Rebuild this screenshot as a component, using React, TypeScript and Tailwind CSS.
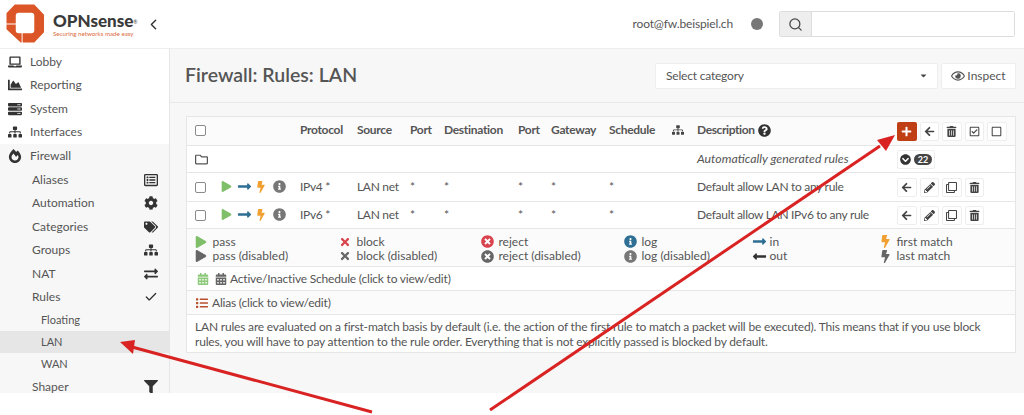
import React from "react";
import {
  FaLaptop, FaChartArea, FaServer, FaSitemap, FaFireAlt, FaRegListAlt, FaCog, FaTags, FaExchangeAlt, FaFilter,
  FaPlay, FaLongArrowAltRight, FaLongArrowAltLeft, FaBolt, FaInfoCircle, FaTimes, FaTimesCircle, FaCalendarAlt, FaList, FaPlus,
  FaArrowLeft, FaTrashAlt, FaRegCheckSquare, FaRegSquare, FaPencilAlt, FaRegClone, FaChevronCircleDown, FaQuestionCircle,
  FaRegFolder, FaRegEye, FaCaretDown,
} from "react-icons/fa";
import { Search, ChevronLeft, Check as CheckMark } from "lucide-react";

const Logo = () => (
  <svg viewBox="0 0 40 40" className="w-[39px] h-[39px] shrink-0 -mt-[2px]">
    <path d="M9 0.5 H29 L39 11 V29 L29 39.5 H17 V30 H26 Q29 30 29 27 V12 Q29 9 26 9 H13 Q10 9 10 12 V20 H0.5 V9.5 Z" fill="#dc5526" />
    <path d="M0.5 21 H10 V27 Q10 30 13 30 H16 V39.5 H15 L0.5 26 Z" fill="#dc5526" />
  </svg>
);

const NavTop = ({ icon, label, active }: { icon: React.ReactNode; label: string; active?: boolean }) => (
  <div className={`h-[23.55px] flex items-center pl-2 ${active ? "bg-[#f7f7f7]" : ""}`}>
    <span className="w-[22px] flex text-[#333] text-[14px]">{icon}</span>
    <span>{label}</span>
  </div>
);
const NavSub = ({ icon, label }: { icon: React.ReactNode; label: string }) => (
  <div className="h-[23.55px] flex items-center justify-between pl-[32px] pr-[11px] bg-[#f7f7f7]">
    <span>{label}</span>
    <span className="text-[#333] text-[14px] flex">{icon}</span>
  </div>
);
const NavLeaf = ({ label, active }: { label: string; active?: boolean }) => (
  <div className={`h-[22.2px] flex items-center pl-[41px] text-[11px] ${active ? "bg-[#e6e6e6]" : "bg-[#f7f7f7]"}`}>{label}</div>
);

const Check = () => <span className="block w-[11px] h-[11px] border border-[#8a8a8a] rounded-[2px] bg-white shrink-0" />;

const Btn = ({ children, primary, w }: { children: React.ReactNode; primary?: boolean; w?: string }) => (
  <span className={`h-[19px] flex items-center justify-center rounded-[2px] text-[11px] shrink-0 ${w ?? "w-[19.5px]"} ${primary ? "bg-[#c03e14] text-white" : "bg-white text-[#444] border border-[#eeeeee]"}`}>
    {children}
  </span>
);

const cols = "grid grid-cols-[25px_80px_57px_53px_34px_74px_33px_58px_63px_25px_200px_1fr] items-center pl-2";

const RuleRow = ({ proto, desc, tall }: { proto: string; desc: string; tall?: boolean }) => (
  <div className={`${cols} ${tall ? "h-[29px]" : "h-[27px]"} pb-[1px] border-t border-[#e6e6e6] bg-white tracking-[-0.3px]`}>
    <span className="mt-[1px]"><Check /></span>
    <span className="flex items-center">
      <FaPlay className="text-[#7fbf6a] text-[11px] ml-[1px]" />
      <FaLongArrowAltRight className="text-[#2f6f94] text-[15px] ml-[5px]" />
      <FaBolt className="text-[#f0a030] text-[12px] ml-[3px]" />
      <FaInfoCircle className="text-[#777] text-[13px] ml-[6px]" />
    </span>
    <span>{proto}</span>
    <span>LAN net</span>
    <span>*</span>
    <span>*</span>
    <span>*</span>
    <span>*</span>
    <span>*</span>
    <span />
    <span>{desc}</span>
    <span className="flex gap-[3px] mt-[1px]">
      <Btn><FaArrowLeft /></Btn>
      <Btn><FaPencilAlt /></Btn>
      <Btn><FaRegClone /></Btn>
      <Btn><FaTrashAlt /></Btn>
    </span>
  </div>
);

const Legend = ({ icon, label }: { icon: React.ReactNode; label: string }) => (
  <div className="flex items-center h-[14.6px]">
    <span className="w-[17.5px] flex items-center">{icon}</span>
    <span>{label}</span>
  </div>
);

export default function App() {
  return (
    <div className="w-[1024px] h-[415px] bg-white relative overflow-hidden text-[12px] text-[#555] font-['Lato','Liberation_Sans',sans-serif]">
      <div className="h-[393px] overflow-hidden flex flex-col">
        <header className="h-[49px] shrink-0 bg-white border-b border-[#eeeeee] flex items-center">
          <div className="w-[169px] flex items-center pl-[6px] pt-[1px]">
            <Logo />
            <div className="ml-[8px] flex flex-col w-[84px]">
              <span className="text-[#3a3a3a] font-black text-[17px] leading-[18px] whitespace-nowrap">OPNsense<sup className="text-[5px] font-normal">®</sup></span>
              <span className="text-[#dc6a3c] text-[6.2px] leading-[8px] whitespace-nowrap">Securing networks made easy</span>
            </div>
            <ChevronLeft size={17} strokeWidth={2} className="text-[#333] ml-[8px] -mt-[1px]" />
          </div>
          <div className="flex-1 flex items-center justify-end pr-[9px]">
            <span className="text-[#555] tracking-[-0.15px]">root@fw.beispiel.ch</span>
            <span className="w-[12px] h-[12px] rounded-full bg-[#777] ml-[18px]" />
            <div className="ml-[16px] flex h-[26px] w-[236px] border border-[#dddddd] rounded-[2px]">
              <span className="w-[32px] bg-[#eeeeee] border-r border-[#dddddd] flex items-center justify-center text-[#444]"><Search size={15} strokeWidth={2} /></span>
              <span className="flex-1 bg-white" />
            </div>
          </div>
        </header>
        <div className="flex-1 flex min-h-0">
          <aside className="w-[170px] shrink-0 bg-white border-r border-[#e6e6e6] pt-[1px] text-[12px]">
            <NavTop icon={<FaLaptop />} label="Lobby" />
            <NavTop icon={<FaChartArea />} label="Reporting" />
            <NavTop icon={<FaServer />} label="System" />
            <NavTop icon={<FaSitemap />} label="Interfaces" />
            <NavTop icon={<FaFireAlt />} label="Firewall" active />
            <NavSub icon={<FaRegListAlt />} label="Aliases" />
            <NavSub icon={<FaCog />} label="Automation" />
            <NavSub icon={<FaTags />} label="Categories" />
            <NavSub icon={<FaSitemap />} label="Groups" />
            <NavSub icon={<FaExchangeAlt />} label="NAT" />
            <NavSub icon={<CheckMark size={14} strokeWidth={2.25} />} label="Rules" />
            <NavLeaf label="Floating" />
            <NavLeaf label="LAN" active />
            <NavLeaf label="WAN" />
            <NavSub icon={<FaFilter />} label="Shaper" />
          </aside>
          <main className="flex-1 bg-[#f7f7f7] flex flex-col min-w-0">
            <div className="h-[54px] shrink-0 flex items-center justify-between pl-4 pr-2 border-b border-[#e9e9e9]">
              <h1 className="text-[19.5px] font-semibold text-[#555] -mt-[1px] -ml-[1px]">Firewall: Rules: LAN</h1>
              <div className="flex gap-[3px]">
                <div className="w-[283px] h-[26px] bg-white border border-[#eeeeee] rounded-[2px] flex items-center justify-between pl-[10px] pr-[9px]">
                  <span className="tracking-[-0.2px]">Select category</span>
                  <FaCaretDown className="text-[#444] text-[9px]" />
                </div>
                <div className="w-[75px] h-[26px] bg-white border border-[#eeeeee] rounded-[2px] flex items-center justify-center gap-[2px]">
                  <FaRegEye className="text-[#555] text-[14px]" />
                  <span>Inspect</span>
                </div>
              </div>
            </div>
            <div className="pt-[13px] pl-4 pr-2">
              <div className="border border-[#e6e6e6] bg-white">
                <div className={`${cols} h-[28px] pb-[2px] bg-[#fbfbfb] font-bold tracking-[-0.3px]`}>
                  <Check />
                  <span />
                  <span>Protocol</span>
                  <span>Source</span>
                  <span>Port</span>
                  <span>Destination</span>
                  <span>Port</span>
                  <span>Gateway</span>
                  <span>Schedule</span>
                  <span className="flex text-[#444]"><FaSitemap /></span>
                  <span className="flex items-center gap-[3px] tracking-[-0.4px]">Description <FaQuestionCircle className="text-[#333] text-[13px]" /></span>
                  <span className="flex gap-[3px] mt-[2px]">
                    <Btn primary><FaPlus /></Btn>
                    <Btn><FaArrowLeft /></Btn>
                    <Btn><FaTrashAlt /></Btn>
                    <Btn><FaRegCheckSquare /></Btn>
                    <Btn><FaRegSquare /></Btn>
                  </span>
                </div>
                <div className={`${cols} h-[27px] border-t border-[#e6e6e6]`}>
                  <FaRegFolder className="text-[#555] text-[13px]" />
                  <span /><span /><span /><span /><span /><span /><span /><span /><span />
                  <span className="italic text-[12.3px]">Automatically generated rules</span>
                  <span className="flex">
                    <Btn w="w-[38px]">
                      <span className="flex items-center gap-[3px]">
                        <FaChevronCircleDown className="text-[#333] text-[11px]" />
                        <span className="px-[4px] h-[11px] leading-[11px] rounded-full bg-[#444] text-white text-[9px] font-bold">22</span>
                      </span>
                    </Btn>
                  </span>
                </div>
                <RuleRow proto="IPv4 *" desc="Default allow LAN to any rule" tall />
                <RuleRow proto="IPv6 *" desc="Default allow LAN IPv6 to any rule" />
                <div className="h-[38px] bg-[#fbfbfb] border-t border-[#e6e6e6] grid grid-cols-[144px_142px_143px_128px_127px_1fr] content-center pl-[8px] pt-[3px] leading-none">
                  <div>
                    <Legend icon={<FaPlay className="text-[#7fbf6a] text-[12px]" />} label="pass" />
                    <Legend icon={<FaPlay className="text-[#666] text-[12px]" />} label="pass (disabled)" />
                  </div>
                  <div>
                    <Legend icon={<FaTimes className="text-[#d9434e] text-[12px]" />} label="block" />
                    <Legend icon={<FaTimes className="text-[#666] text-[12px]" />} label="block (disabled)" />
                  </div>
                  <div>
                    <Legend icon={<FaTimesCircle className="text-[#d9434e] text-[13px]" />} label="reject" />
                    <Legend icon={<FaTimesCircle className="text-[#666] text-[13px]" />} label="reject (disabled)" />
                  </div>
                  <div>
                    <Legend icon={<FaInfoCircle className="text-[#2f6f94] text-[13px]" />} label="log" />
                    <Legend icon={<FaInfoCircle className="text-[#777] text-[13px]" />} label="log (disabled)" />
                  </div>
                  <div>
                    <Legend icon={<FaLongArrowAltRight className="text-[#2f6f94] text-[15px]" />} label="in" />
                    <Legend icon={<FaLongArrowAltLeft className="text-[#333] text-[15px]" />} label="out" />
                  </div>
                  <div>
                    <Legend icon={<FaBolt className="text-[#f0a030] text-[13px]" />} label="first match" />
                    <Legend icon={<FaBolt className="text-[#666] text-[13px]" />} label="last match" />
                  </div>
                </div>
                <div className="h-[24px] border-t border-[#e6e6e6] flex items-center pl-[10px] pt-[1px] gap-[6px] tracking-[-0.2px]">
                  <FaCalendarAlt className="text-[#8cc97a] text-[12px]" />
                  <FaCalendarAlt className="text-[#666] text-[12px]" />
                  <span className="-ml-[3px]">Active/Inactive Schedule (click to view/edit)</span>
                </div>
                <div className="h-[24px] border-t border-[#e6e6e6] bg-[#fbfbfb] flex items-center pl-[9px] pt-[1px] gap-[4px] tracking-[-0.2px]">
                  <FaList className="text-[#b8502e] text-[12px]" />
                  <span>Alias (click to view/edit)</span>
                </div>
                <div className="h-[38px] border-t border-[#e6e6e6] pl-[8px] pr-[30px] pt-[2px] flex items-center leading-[14.6px] tracking-[-0.19px]">
                  <p>LAN rules are evaluated on a first-match basis by default (i.e. the action of the first rule to match a packet will be executed). This means that if you use block rules, you will have to pay attention to the rule order. Everything that is not explicitly passed is blocked by default.</p>
                </div>
              </div>
            </div>
          </main>
        </div>
      </div>
      <svg className="absolute inset-0 pointer-events-none" width="1024" height="415" viewBox="0 0 1024 415">
        <path d="M372 412 L132 347" stroke="#d92323" strokeWidth="3" fill="none" />
        <path d="M120 342 L135 340 L133 354 Z" fill="#d92323" />
        <path d="M490 410 L880 146" stroke="#d92323" strokeWidth="3" fill="none" />
        <path d="M895 135 L877 140 L886 151 Z" fill="#d92323" />
      </svg>
    </div>
  );
}
